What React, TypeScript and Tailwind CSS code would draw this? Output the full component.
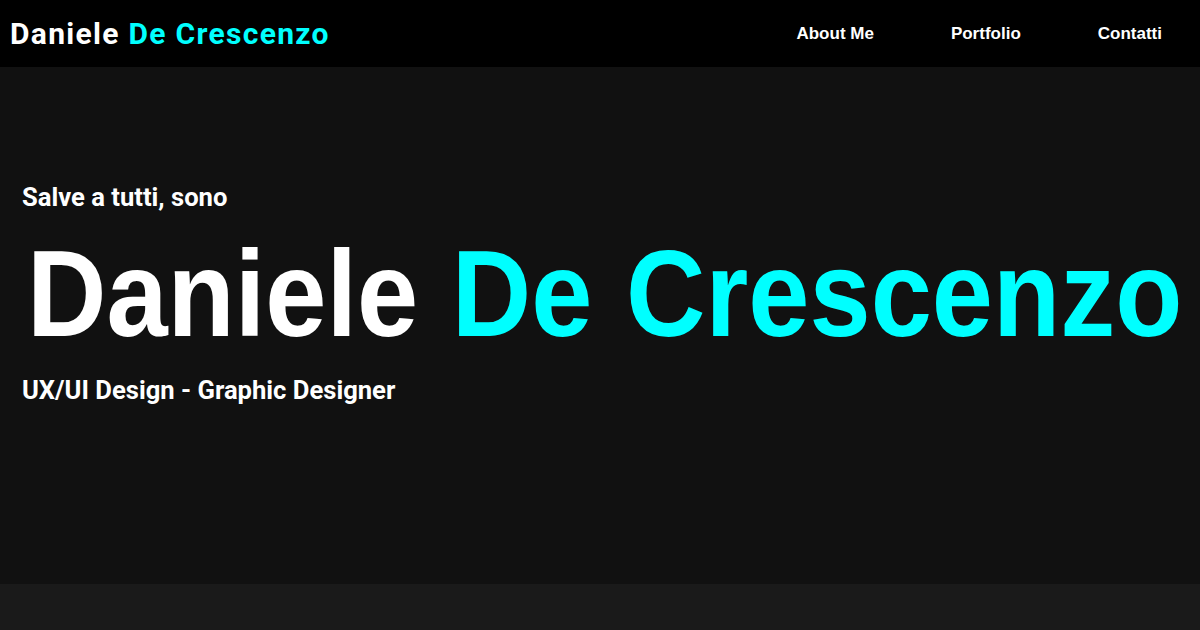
const roboto = { fontFamily: 'Roboto, "Liberation Sans", Arial, sans-serif' }

function Header() {
  return (
    <header className="h-[67px] bg-black flex items-center justify-between pl-[10px] pr-[38px]">
      <a
        href="#"
        className="text-[30px] font-bold tracking-[1.3px] leading-none text-white"
        style={roboto}
      >
        Daniele <span className="text-[#00ffff]">De Crescenzo</span>
      </a>
      <nav
        className="flex items-center gap-[77px] text-[17px] font-bold text-white"
        style={{ fontFamily: '"Liberation Sans", Arial, sans-serif' }}
      >
        <a href="#">About Me</a>
        <a href="#">Portfolio</a>
        <a href="#">Contatti</a>
      </nav>
    </header>
  )
}

function Hero() {
  return (
    <section className="h-[517px] bg-[#111111] pt-[115px] px-[22px]">
      <p className="text-[25.6px] leading-[30px] font-bold text-white" style={roboto}>
        Salve a tutti, sono
      </p>
      <h1
        className="mt-[26px] ml-[5px] text-[110px] leading-[110px] font-bold text-white whitespace-nowrap [word-spacing:3px] scale-y-[1.12]"
        style={{ fontFamily: '"Liberation Sans", Arial, sans-serif' }}
      >
        Daniele <span className="text-[#00ffff]">De Crescenzo</span>
      </h1>
      <p className="mt-[26px] text-[25.6px] leading-[32px] font-bold text-white" style={roboto}>
        UX/UI Design - Graphic Designer
      </p>
    </section>
  )
}

export default function App() {
  return (
    <div className="min-h-[630px] bg-[#1a1a1a]">
      <Header />
      <Hero />
    </div>
  )
}
